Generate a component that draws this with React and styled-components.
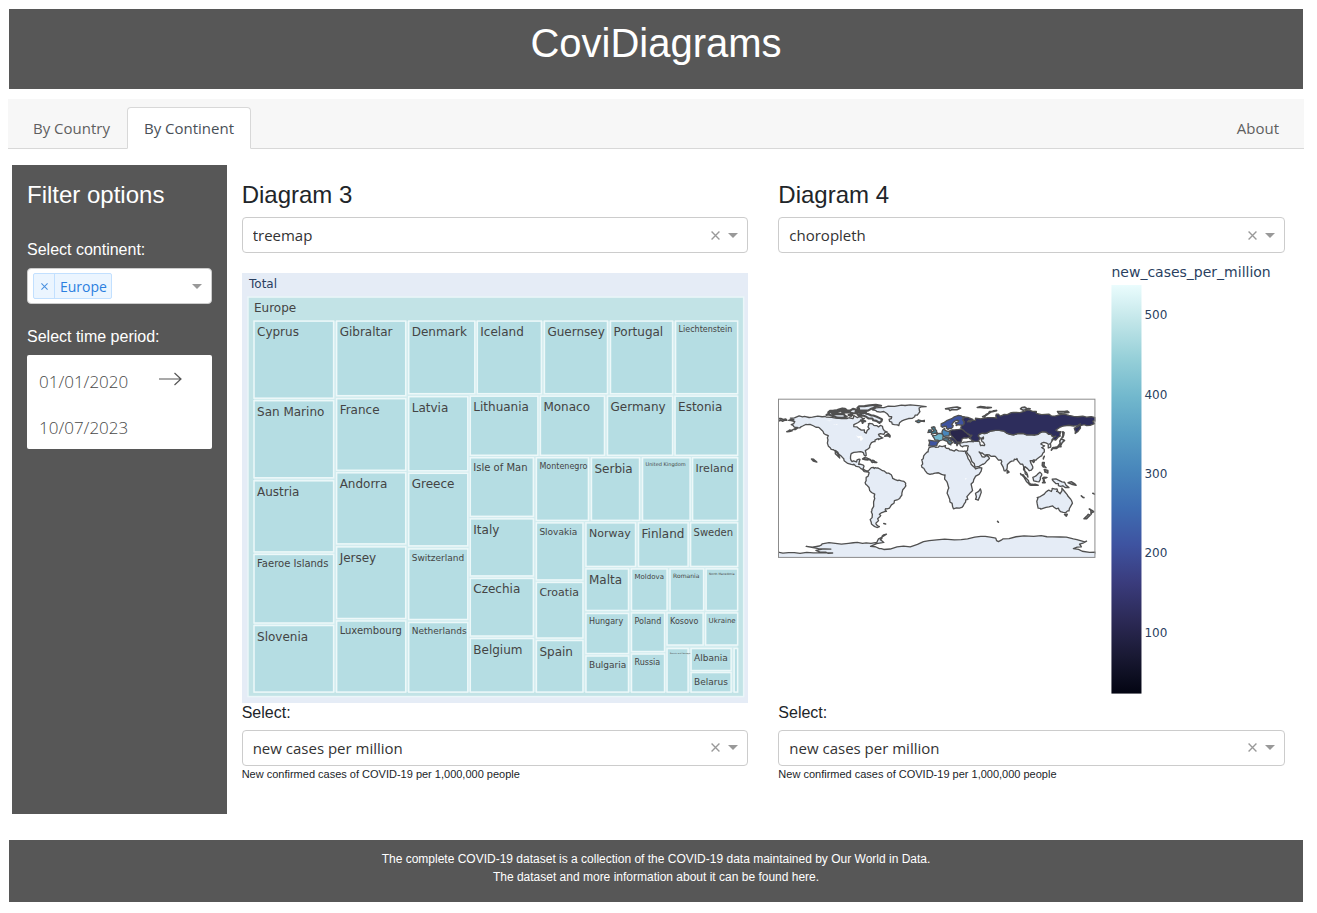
import React from "react";
import styled, { createGlobalStyle } from "styled-components";

const GREY = "#575757";
const UI = '"Open Sans", "Noto Sans", sans-serif';
const SANS = '"Liberation Sans", Arial, sans-serif';
const CHART = '"DejaVu Sans", Verdana, sans-serif';

const GlobalStyle = createGlobalStyle`
  *, *::before, *::after { box-sizing: border-box; }
  body { margin: 0; background: #fff; color: #212529; font-family: ${SANS}; font-size: 16px; }
  button, input, select { font: inherit; color: inherit; margin: 0; }
`;

const Page = styled.div`
  padding: 9px 13px 11px 8px;
`;

const Header = styled.header`
  height: 80px;
  margin: 0 1px 10px;
  padding-top: 10px;
  background: ${GREY};
  text-align: center;
`;

const Title = styled.h1`
  margin: 0;
  color: #fff;
  font-size: 40px;
  font-weight: 400;
  line-height: 48px;
`;

const TabBar = styled.nav`
  display: flex;
  align-items: flex-end;
  height: 50px;
  padding: 0 8px;
  background: #f7f7f7;
  border-bottom: 1px solid #d8d8d8;
`;

const Tab = styled.a`
  height: 42px;
  margin-bottom: -1px;
  margin-left: ${(p) => (p.$end ? "auto" : "0")};
  padding: 0 16px;
  border: 1px solid ${(p) => (p.$active ? "#d8d8d8" : "transparent")};
  border-bottom-color: ${(p) => (p.$active ? "#fff" : "transparent")};
  border-radius: 4px 4px 0 0;
  background: ${(p) => (p.$active ? "#fff" : "transparent")};
  color: ${(p) => (p.$active ? "#495057" : "#5f5f5f")};
  font-family: ${UI};
  font-size: 15px;
  line-height: 40px;
  text-decoration: none;
`;

const Columns = styled.main`
  display: grid;
  grid-template-columns: minmax(0, 2fr) minmax(0, 5fr) minmax(0, 5fr);
  margin: 16px 4px 26px;
`;

const Column = styled.section`
  padding: 15px 15px 32px;
`;

const Sidebar = styled.aside`
  padding: 15px;
  background: ${GREY};
  color: #fff;
`;

const Heading = styled.h2`
  margin: 0 0 8px;
  font-size: 24px;
  font-weight: 400;
  line-height: 29px;
`;

const SidebarHeading = styled(Heading)`
  margin-bottom: 30px;
`;

const FilterLabel = styled.label`
  display: block;
  margin: 22px 0 7px;
  line-height: 22px;
`;

const SelectLabel = styled.label`
  display: block;
  margin-bottom: 7px;
  line-height: 20px;
`;

const Control = styled.div`
  display: flex;
  align-items: center;
  height: 36px;
  padding-right: 5px;
  background: #fff;
  border: 1px solid #ccc;
  border-radius: 4px;
  color: #333;
  font-family: ${UI};
  font-size: 15px;
`;

const Select = styled.select`
  flex: 1;
  min-width: 0;
  height: 34px;
  padding: 0 10px;
  border: 0;
  background: transparent;
  appearance: none;
`;

const IconButton = styled.button`
  display: flex;
  align-items: center;
  justify-content: center;
  width: 18px;
  height: 18px;
  padding: 0;
  border: 0;
  background: transparent;
  color: #999;
`;

const Chip = styled.span`
  display: flex;
  height: 26px;
  margin-left: 5px;
  border: 1px solid #c2e0ff;
  border-radius: 2px;
  background: #ebf5ff;
  color: #2b7fe0;
  font-size: 14px;
  line-height: 26px;
`;

const ChipRemove = styled(IconButton)`
  width: 21px;
  height: 24px;
  border-right: 1px solid #c2e0ff;
  color: #4a90e0;
`;

const ChipText = styled.span`
  padding: 0 4px 0 5px;
`;

const SearchInput = styled.input`
  flex: 1;
  min-width: 0;
  border: 0;
  background: transparent;
  outline: 0;
`;

const DateRange = styled.div`
  display: flex;
  flex-wrap: wrap;
  align-items: center;
  padding: 1px 0;
  background: #fff;
  border-radius: 2px;
  color: #484848;
`;

const DateInput = styled.input`
  width: 131px;
  height: 46px;
  padding: 4px 11px 0 12px;
  border: 0;
  background: transparent;
  font-family: ${UI};
  font-size: 17px;
  font-weight: 300;
`;

const Chart = styled.svg`
  display: block;
  width: 100%;
  height: auto;
  font-family: ${CHART};
`;

const Note = styled.p`
  margin: 0;
  font-size: 11px;
  line-height: 16px;
`;

const Footer = styled.footer`
  margin: 0 1px;
  padding: 10px 0 16px;
  background: ${GREY};
  color: #fff;
  text-align: center;
  font-size: 12px;
  line-height: 18px;
`;

const FooterLine = styled.p`
  margin: 0;
`;

const FooterLink = styled.a`
  color: inherit;
  text-decoration: none;
`;

const Cross = ({ size = 9 }) => (
  <svg width={size} height={size} viewBox="0 0 8 8" aria-hidden="true">
    <path d="M.5 .5 L7.500 7.500 M7.500 .5 L.5 7.500" stroke="currentColor" strokeWidth="1.200" fill="none" />
  </svg>
);

const Caret = () => (
  <svg width="10" height="5" viewBox="0 0 10 5" aria-hidden="true">
    <path d="M0 0H10L5 5Z" fill="#999" />
  </svg>
);

const Arrow = () => (
  <svg width="24" height="14" viewBox="0 0 24 14" aria-hidden="true">
    <path d="M1 7H23M16.500 1L23 7L16.500 13" stroke="#555" strokeWidth="1.200" fill="none" />
  </svg>
);

// name, font size, left, top, right, bottom
const CELLS = [
  ["Cyprus", 12, 12, 48, 91.5, 125],
  ["San Marino", 12, 12, 127.5, 91.5, 204.5],
  ["Austria", 12, 12, 207.5, 91.5, 278.5],
  ["Faeroe Islands", 10, 12, 281, 91.5, 349.5],
  ["Slovenia", 12, 12, 352, 91.5, 418.5],
  ["Gibraltar", 12, 94.5, 48, 163.5, 122.5],
  ["France", 12, 94.5, 125.5, 163.5, 197],
  ["Andorra", 12, 94.5, 199.5, 163.5, 270.5],
  ["Jersey", 12, 94.5, 273.5, 163.5, 345],
  ["Luxembourg", 10, 94.5, 347.5, 163.5, 418.5],
  ["Denmark", 12, 166.5, 48, 232.5, 120.5],
  ["Latvia", 12, 166.5, 123.5, 225.5, 197.5],
  ["Greece", 12, 166.5, 200, 225.5, 272.5],
  ["Switzerland", 9, 166.5, 275.5, 225.5, 346],
  ["Netherlands", 9, 166.5, 349, 225.5, 418.5],
  ["Iceland", 12, 235, 48, 299, 120.5],
  ["Guernsey", 12, 302, 48, 365, 120.5],
  ["Portugal", 12, 368, 48, 430, 120.5],
  ["Liechtenstein", 8, 433, 48, 495, 120.5],
  ["Lithuania", 12, 228, 123, 295.5, 182],
  ["Monaco", 12, 298, 123, 362, 182],
  ["Germany", 12, 365, 123, 430, 182],
  ["Estonia", 12, 432.5, 123, 495, 182],
  ["Isle of Man", 10, 228, 184.5, 291, 243],
  ["Italy", 12, 228, 245.5, 291, 302.5],
  ["Czechia", 12, 228, 305, 291, 362.5],
  ["Belgium", 12, 228, 365, 291, 418.5],
  ["Montenegro", 8, 294, 184.5, 346, 247],
  ["Serbia", 12, 349, 184.5, 397, 247],
  ["United Kingdom", 5, 400, 184.5, 447.5, 247],
  ["Ireland", 11, 450, 184.5, 495, 247],
  ["Slovakia", 9, 294, 249.5, 340.5, 306.5],
  ["Croatia", 11, 294, 309, 340.5, 364.5],
  ["Spain", 12, 294, 367, 340.5, 418.5],
  ["Norway", 11, 343.5, 249.5, 393, 293],
  ["Finland", 12, 396, 249.5, 445.5, 293],
  ["Sweden", 10, 448, 249.5, 495, 293],
  ["Malta", 12, 343.5, 295.5, 386, 337],
  ["Moldova", 7, 389, 295.5, 424.5, 337],
  ["Romania", 6, 427.5, 295.5, 461, 337],
  ["North Macedonia", 3, 463.5, 295.5, 495, 337],
  ["Hungary", 8, 343.5, 340, 386, 380],
  ["Bulgaria", 9, 343.5, 382.5, 386, 418.5],
  ["Poland", 8, 389, 339.5, 422, 378],
  ["Russia", 8, 389, 380.5, 422, 418.5],
  ["Kosovo", 8, 424.5, 339.5, 460.5, 371.5],
  ["Ukraine", 7, 463, 339.5, 495, 371.5],
  ["Bosnia and Herzegovina", 2, 424.5, 375, 445.5, 418.5],
  ["Albania", 9, 448.5, 375, 488.5, 397],
  ["Belarus", 9, 448.5, 399, 488.5, 418.5],
  ["", 3, 491.5, 375, 495, 418.5],
];

const Treemap = () => (
  <Chart viewBox="0 -20 506 449" role="img" aria-label="Treemap of new cases per million">
    <rect width="506" height="430" fill="#e5ecf6" />
    <text x="7" y="15" fontSize="12" fill="#2a3f5f">Total</text>
    <rect x="6" y="24" width="495" height="399" fill="#c2e3e6" stroke="#eaf6f8" strokeWidth="1.500" />
    <text x="12" y="39" fontSize="12" fill="#444">Europe</text>
    <rect x="12" y="48" width="483" height="370.500" fill="#d3ecef" />
    {CELLS.map(([name, size, x0, y0, x1, y1]) => (
      <g key={name + x0}>
        <rect x={x0} y={y0} width={x1 - x0} height={y1 - y0} fill="#b5dde3" stroke="#edf8f9" strokeWidth="1.500" />
        <text x={x0 + 3} y={y0 + size + 3} fontSize={size} fill="#444">{name}</text>
      </g>
    ))}
  </Chart>
);

// Outlines as "longitude,latitude" pairs.
const LAND = [
  "-168,66 -162,66.5 -164,68 -166,68.5 -156,71 -150,70.5 -141,69.7 -130,70 -125,69.5 -115,68.5 -108,68 -102,67.8 -95,68 -94,71.5 -90,69 -85,69.5 -82,68 -87,65 -94,61 -94,58.7 -88,56.5 -82,55 -82,52.5 -80,51.3 -79,54 -76.5,56.5 -78,58.5 -77.5,62 -73,62 -70,60 -66,58.5 -64,60.2 -61,56.5 -56,52.5 -60,50 -66,50 -65,48 -61,46 -66,44 -66,45 -70,43.5 -70,41.7 -74,40.5 -76,37 -76,35 -81,31.5 -80,26 -81,25.2 -83,29 -85,30 -89,30 -94,29.5 -97,28 -97.8,22.5 -96,19 -91,18.6 -90.3,21 -87,21.5 -88,18 -88.5,15.8 -83.3,15 -83.5,11 -81,9 -77.5,8.5 -75.5,10.7 -71.5,12.3 -71,11 -68,11.5 -64,10.3 -60,8.5 -57,6 -51.5,4 -50,0 -44,-2.7 -40,-3 -35.2,-5.5 -35,-8.5 -38.5,-13 -39.5,-19 -42,-23 -48,-25.5 -49,-28.7 -53.5,-33.8 -58,-34.5 -57,-37.5 -62,-39 -65,-41 -63.5,-42.5 -67,-46 -66,-48 -69,-51 -68.5,-52.5 -65,-55 -70,-55 -74,-52 -75.5,-47 -73,-41 -73.5,-37 -71.5,-32 -70.3,-23 -70.3,-18 -76,-14 -79.5,-7.5 -81.2,-5 -80,-2.5 -80,1 -77.5,3.5 -77.5,7 -80,7.3 -83,8.3 -86,11 -88,13 -94,16 -97,15.8 -105,20 -105.5,22.5 -109,26 -112.5,30 -114.7,31.7 -112,27.5 -110,23 -112,25 -115,28 -117,32.5 -120.5,34.5 -124,40 -124,46 -123,48.5 -128,51 -130,54.5 -134,58 -140,59.8 -147,61 -152,59.5 -155,57.5 -160,55.5 -164.5,54.7 -158,58 -162,58.7 -165,61 -161,64.5",
  "-6,35.8 -1,35.2 3,36.8 10,37.3 11,34 15,32.3 20,31 22,32.8 29,31 32.3,31.2 33,28.5 35,24.5 37.3,20 39,16 43.3,12 44,10.6 51.2,11.8 48,4.5 42,-1.5 39,-6.5 40.7,-14 35,-20 35.4,-24 32.7,-27 30,-31.5 25.7,-34 19,-34.7 18,-32 15,-27 14,-22 11.8,-17 13.7,-11 12,-5 9,-1 9.5,3.8 5.5,4.4 2,6.3 -4,5.2 -7.7,4.4 -13,8.5 -16.7,12.5 -17.3,14.7 -16.3,19 -17,21 -14.8,25.5 -13,27.8 -9.8,30 -9.5,32.5",
  "26,40 27,37 30,36.5 36,36.7 35,32 34.3,31.3 35,28 39,22 42.7,16.5 43.5,12.7 52,16 55,17.5 59.8,22.5 56.5,26 54,24 51.5,24.5 50.2,27 48,30 51,29 54,26.7 57,27 61.5,25 66.5,25 70,20.7 72.8,21 73,17 76.5,8.5 78,8.5 80,13 80.2,15.8 85,19.5 88,21.7 91,22.5 94.3,17 97.5,16 98.5,10 100.4,5 103.5,1.3 103,4 100,8.5 100,13.3 105,8.6 109,11.7 107,17 106,20 110,21 114,22.3 119,25.5 122,30 120.5,34 119,35 122.4,37 118,39 121.5,41 124.5,40 126.5,37.5 126.5,34.5 129.3,35.5 128,39 130.7,42.3 133,45 135,48 131,48 127,50 120,53 115,50 108,49.5 98,51 87,49.3 80,51 71,54.5 61,53.8 55,51 48,50 47,48 49,46 53,47 53,45 51,44.5 50.3,44.5 53,41 54,37.2 50,37 49,40 47,43 40,43.2 41.5,41.5 36,41.7 31,41.2",
  "-73,78 -66,80.5 -55,82 -40,83.3 -30,83.5 -12,81.5 -20,80 -19,76 -22,72 -25,70 -32,68 -40,65 -43,60 -48,61 -51,64 -54,67 -51,70 -55,72 -60,76 -68,76",
  "114,-22 122,-18 126,-14 130,-15 131,-11.5 136.5,-12 136,-15 140,-17.5 142,-11 145,-15 149,-20.5 153,-25.5 153,-30 150,-37 146.5,-39 140.5,-38 138,-34 135.5,-34.7 131.5,-31.5 124,-33 118,-35 115,-34 113.5,-26",
  "131,-1 138,-2 145,-4.5 150,-10.5 143,-8.5 138,-8.3 138,-6 133,-4",
  "109,1 113,3 117,7 119,5 117.5,1 116,-4 110,-3",
  "95,5.5 98,4 104,-2.5 106,-6 102,-4",
  "49.5,-12 50.5,-16 47,-25 44,-24 44,-17",
  "-180,-84 -168,-84.500 -155,-85.500 -140,-84.800 -118,-85 -126,-84 -137,-82 -120,-80.500 -148,-77.500 -133,-77 -130,-74.500 -115,-74 -100,-74 -90,-73 -80,-73.500 -68,-73 -66,-69 -57,-63.500 -62,-66 -64,-70 -60,-73 -75,-77.500 -65,-80 -60,-81 -45,-78 -30,-78 -15,-72 0,-70 20,-70 35,-69 50,-66 55,-66 67,-68 70,-72 75,-69 90,-66.500 110,-66 125,-66.500 140,-66.800 155,-69 165,-71.500 170,-71.500 162,-75 164,-78 155,-80 165,-83 180,-84 184,-94 -184,-94",
];

const ARCTIC = [
  "-125,72 -120,76 -115,73 -105,73 -102,70 -113,69 -118,71",
  "-123,75 -117,77 -110,76 -114,74.500",
  "-100,77 -95,79 -88,77 -92,76 -80,75.500 -92,74 -98,75",
  "-90,80 -88,82 -76,83 -63,82.500 -72,80 -78,77 -88,77",
  "-90,73 -85,74 -80,73.500 -74,71.500 -68,70 -62,67 -65,63 -72,66 -73,68 -80,70 -88,71",
  "-86,66 -81,65 -84,63",
  "-108,76 -103,77 -100,75 -105,75.500",
  "-100,72 -96,74 -97,71",
  "-112,78 -104,79 -102,77.500",
];

const OUTLINES = [
  "52,70 56,72.500 60,76 68,77 60,74.500 55,71",
  "10,79 18,80.500 27,80 20,78 15,77",
  "95,79 100,81 106,79 100,78",
  "137,76 145,76 150,75 141,74",
  "46,80.500 55,81 62,80.500 54,80",
  "142,46 143,53 144,49",
  "130,32 131,34 136,34 141,36 142,40 145,43 141,45 140,40 137,36 132,35",
  "120,18 122,18 122,14 124,12 121,13",
  "122,10 126,9 126,6 123,7",
  "105,-7 110,-7 115,-8 107,-8",
  "120,-5 122,-3 120,0 125,1 121,0 123,-5",
  "167,-46 172,-41 174,-42 170,-46",
  "173,-35 178,-38 175,-41 175,-38",
  "145,-41 148,-41 147,-43",
  "80,9 82,7 80,6",
  "-84,22 -79,23 -74,20 -78,21",
  "-74,19 -71,20 -68,18 -73,18",
  "-60,-51.500 -58,-52",
  "-142,22 -138,20 -136,18.500",
  "-59,48 -55,51 -53,47",
  "-180,68 -174,67 -170,66 -175,65 -180,65",
  "-170,53 -164,54 -168,54",
  "149,-5 153,-4 158,-8",
  "164,-20 167,-22",
  "177,-17 179,-18",
  "69,-49 70,-50",
  "109,19 111,20 110,18",
  "121,22 122,25",
];

const EUROPE = [
  ["#2d2d5c", "28,70 41,67 40,65.500 35,64.300 38,64 44,66 44,68.500 54,68.500 60,69 68,68.500 67,71 70,73 73,71 80,72.500 87,75 100,76.500 105,77.500 113,76 113,73.800 127,73 130,71 140,72.500 150,71.500 160,70 170,69.500 180,69 180,65 177,64.500 179,62.300 170,60 163,60 163,57 157,51 156,57 163,62 155,59.500 143,59.300 135,54.700 141,53 140,48 135,43.500 131,43 135,48 131,48 127,50 120,53 115,50 108,49.500 98,51 87,49.300 80,51 71,54.500 61,53.800 55,51 48,50 47,48 49,46 47,42 40,43.200 37,45.500 39,47.500 35.500,50.500 31,53 28,56 28,60 31,62.500 29,67"],
  ["#3e53a0", "5,59 5,62 12,66 20,70 28,71 31,70 29,67 31,62.500 28,60.500 22,60 21,63 25,65.500 22,65.800 17,61 18.700,60 16,56.500 13,55.500 11,59 7,58"],
  ["#29264c", "15,54 20,55 28,56 32,53 35,50.500 40,49 38,47 31,46 28,42 23,41 20,42 19,46 16,49"],
  ["#72b8cd", "-5,48.500 2,51 8,49 7,44 3,42.500 -2,43.500"],
  ["#4886bb", "6,53 9,57 11,54 15,54 14,48 8,47.500"],
  ["#3e53a0", "-9,43.500 3,42.500 0,37 -9,37"],
  ["#3f8299", "-6,50 1,51 0,54 -2,58 -6,58 -3,54"],
  ["#356f8e", "-10,52 -6,52 -6,55 -9,55"],
  ["#4d8398", "-24,65 -21,66.500 -14,66 -14,64.500 -20,63.500"],
  ["#55778a", "7,44 9,46 14,46 13,44 18,40.500 16,38 12,42"],
  ["#33345e", "14,46 19,46 23,41 26,41 23,37 20,40 17,43"],
];

const WATER = ["-92,49 -85,48.500 -85,46.500 -83,46 -84,44 -87,43 -87,46 -90,47", "-118,62 -112,62 -116,61", "-125,66 -118,66 -122,65", "32,0 34,0 33,-2"];

// Builds a closed path, with a small bend in the middle of each longer segment so that coasts look natural.
const outline = (points) => {
  const list = points.split(" ").map((pair) => pair.split(",").map(Number));
  const path = [];
  list.forEach(([lon, lat], i) => {
    const [nextLon, nextLat] = list[(i + 1) % list.length];
    const midLon = (lon + nextLon) / 2;
    const midLat = (lat + nextLat) / 2;
    path.push(`${lon} ${-lat}`);
    if (Math.hypot(nextLon - lon, nextLat - lat) > 3) {
      path.push(`${midLon + Math.sin(midLon * 7 + midLat * 3)} ${-midLat + Math.cos(midLon * 5 + midLat * 11)}`);
    }
  });
  return "M" + path.join("L") + "Z";
};

const ICE = ["#030512", "#191933", "#2c2a57", "#3a3c7d", "#3e53a0", "#3e6db2", "#4886bb", "#599fc4", "#72b8cd", "#95cfd8", "#c0e5e8", "#eafcfd"];

const TICKS = [[500, 42], [400, 122], [300, 201], [200, 280], [100, 360]];

const Choropleth = () => (
  <Chart viewBox="0 -20 506 449" role="img" aria-label="World map of new cases per million">
    <defs>
      <linearGradient id="ice" x1="0" y1="1" x2="0" y2="0">
        {ICE.map((color, i) => (
          <stop key={color} offset={i / (ICE.length - 1)} stopColor={color} />
        ))}
      </linearGradient>
    </defs>
    <svg x="0" y="126" width="317" height="158" viewBox="-180 -90 360 180" preserveAspectRatio="none">
      <g stroke="#505050" strokeWidth="1.500" strokeLinejoin="round" fill="#e5ecf6">
        {LAND.map((p) => <path key={p} d={outline(p)} />)}
        <g strokeWidth="2.400">
          {ARCTIC.map((p) => <path key={p} d={outline(p)} />)}
        </g>
        <g strokeWidth="1.800">
          {OUTLINES.map((p) => <path key={p} d={outline(p)} />)}
        </g>
        {EUROPE.map(([color, p]) => <path key={p} d={outline(p)} fill={color} />)}
        <g stroke="none" fill="#fff">
          {WATER.map((p) => <path key={p} d={outline(p)} />)}
        </g>
      </g>
    </svg>
    <rect x="0.500" y="126" width="316" height="158" fill="none" stroke="#8c8c8c" />
    <text x="333" y="4" fontSize="14" fill="#2a3f5f">new_cases_per_million</text>
    <rect x="333" y="12" width="30" height="408" fill="url(#ice)" />
    {TICKS.map(([value, y]) => (
      <text key={value} x="366" y={y + 4} fontSize="12" fill="#2a3f5f">{value}</text>
    ))}
  </Chart>
);

const Dropdown = ({ id, label, options }) => (
  <Control>
    <Select id={id} aria-label={label} defaultValue={options[0]}>
      {options.map((option) => <option key={option}>{option}</option>)}
    </Select>
    <IconButton type="button" aria-label="Clear"><Cross /></IconButton>
    <IconButton as="span"><Caret /></IconButton>
  </Control>
);

const Diagram = ({ number, kinds, children }) => (
  <Column>
    <Heading>Diagram {number}</Heading>
    <Dropdown id={`kind-${number}`} label={`Diagram ${number} type`} options={kinds} />
    {children}
    <SelectLabel htmlFor={`metric-${number}`}>Select:</SelectLabel>
    <Dropdown id={`metric-${number}`} options={["new cases per million"]} />
    <Note>New confirmed cases of COVID-19 per 1,000,000 people</Note>
  </Column>
);

export default function App() {
  return (
    <>
      <GlobalStyle />
      <Page>
        <Header>
          <Title>CoviDiagrams</Title>
        </Header>
        <TabBar>
          <Tab href="#country">By Country</Tab>
          <Tab href="#continent" $active aria-current="page">By Continent</Tab>
          <Tab href="#about" $end>About</Tab>
        </TabBar>
        <Columns>
          <Sidebar>
            <SidebarHeading>Filter options</SidebarHeading>
            <FilterLabel htmlFor="continent">Select continent:</FilterLabel>
            <Control>
              <Chip>
                <ChipRemove type="button" aria-label="Remove Europe"><Cross size={7} /></ChipRemove>
                <ChipText>Europe</ChipText>
              </Chip>
              <SearchInput id="continent" type="text" role="combobox" aria-expanded="false" />
              <IconButton as="span"><Caret /></IconButton>
            </Control>
            <FilterLabel htmlFor="start-date">Select time period:</FilterLabel>
            <DateRange>
              <DateInput id="start-date" type="text" defaultValue="01/01/2020" />
              <Arrow />
              <DateInput type="text" aria-label="End date" defaultValue="10/07/2023" />
            </DateRange>
          </Sidebar>
          <Diagram number={3} kinds={["treemap", "choropleth"]}>
            <Treemap />
          </Diagram>
          <Diagram number={4} kinds={["choropleth", "treemap"]}>
            <Choropleth />
          </Diagram>
        </Columns>
        <Footer>
          <FooterLine>The complete COVID-19 dataset is a collection of the COVID-19 data maintained by Our World in Data.</FooterLine>
          <FooterLine>The dataset and more information about it can be found <FooterLink href="#dataset">here.</FooterLink></FooterLine>
        </Footer>
      </Page>
    </>
  );
}
